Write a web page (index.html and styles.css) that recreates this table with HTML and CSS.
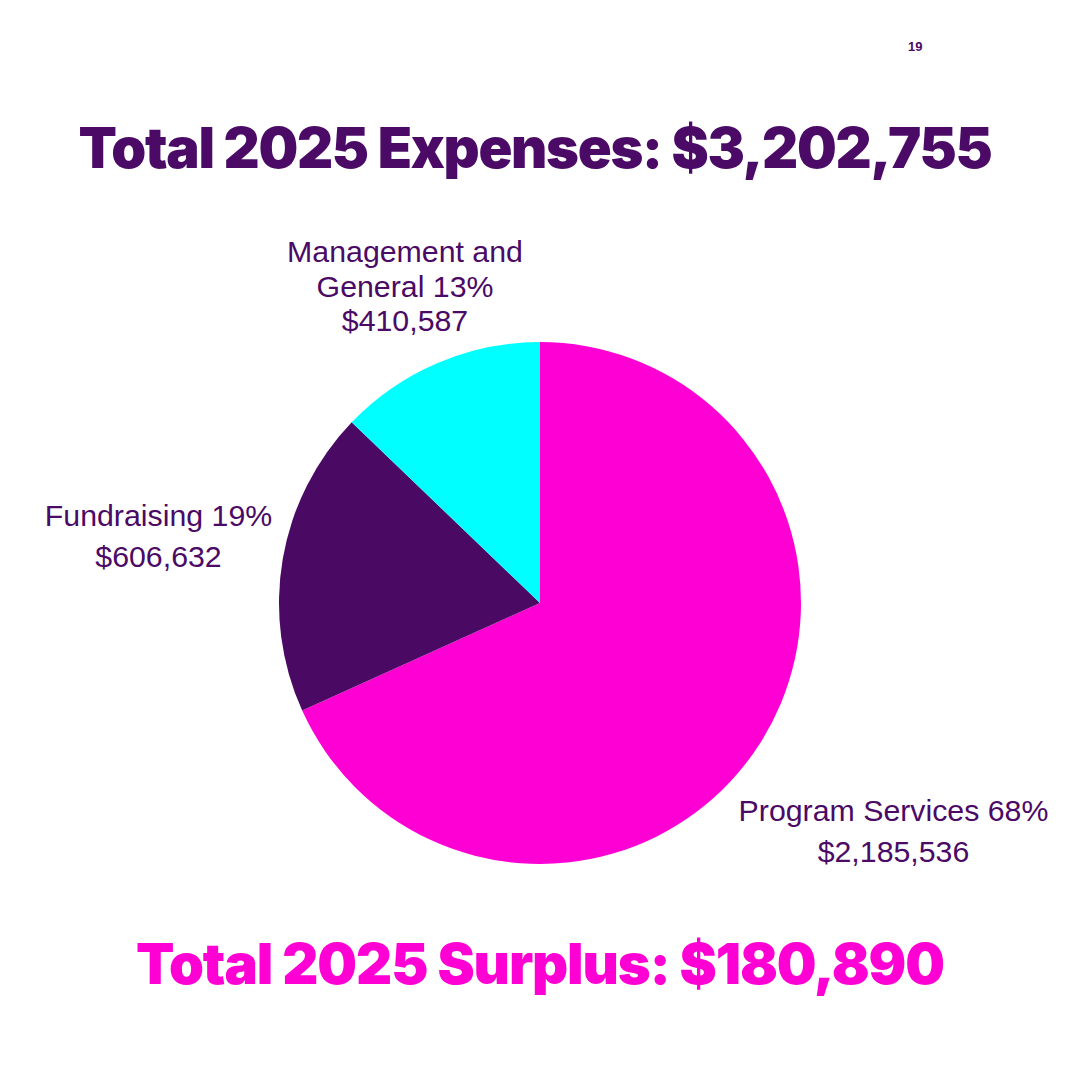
FILE: index.html
```html
<!DOCTYPE html>
<html lang="en">
<head>
<meta charset="utf-8">
<title>Total 2025 Expenses</title>
<link rel="stylesheet" href="styles.css">
</head>
<body>
<div class="page">
  <div class="page-num">19</div>
  <h1 class="title">Total 2025 Expenses: $3,202,755</h1>
  <div class="chart">
    <svg class="pie" width="1080" height="746" viewBox="0 0 1080 746">
      <path class="slice slice-program" d="M540 420 L540 159 A261 261 0 1 1 302.2 527.6 Z"/>
      <path class="slice slice-fund" d="M540 420 L302.2 527.6 A261 261 0 0 1 351.7 239.3 Z"/>
      <path class="slice slice-mgmt" d="M540 420 L351.7 239.3 A261 261 0 0 1 540 159 Z"/>
    </svg>
    <div class="label label-mgmt">Management and<br>General 13%<br>$410,587</div>
    <div class="label label-fund">Fundraising 19%<br>$606,632</div>
    <div class="label label-program">Program Services 68%<br>$2,185,536</div>
  </div>
  <h2 class="surplus">Total 2025 Surplus: $180,890</h2>
</div>
</body>
</html>
```
FILE: styles.css
```css
html, body {
  margin: 0;
  padding: 0;
  background: #ffffff;
}
.page {
  position: relative;
  width: 1080px;
  height: 1080px;
  overflow: hidden;
  font-family: "Liberation Sans", Arial, sans-serif;
  color: #4a0a66;
}
.page-num {
  position: absolute;
  left: 908px;
  top: 39px;
  font-size: 13px;
  font-weight: 700;
  color: #4a0a66;
}
.title {
  margin: 0;
  padding-top: 113px;
  padding-right: 10px;
  text-align: center;
  font-family: Inter, "DejaVu Sans", sans-serif;
  font-weight: 900;
  font-size: 56px;
  line-height: 70px;
  letter-spacing: -1.3px;
  color: #4a0a66;
}
.chart {
  position: relative;
  height: 746px;
}
.pie {
  display: block;
}
.slice-program { fill: #ff00d4; }
.slice-fund { fill: #4a0a63; }
.slice-mgmt { fill: #00ffff; }
.label {
  position: absolute;
  width: 360px;
  text-align: center;
  white-space: nowrap;
  font-size: 30.3px;
  color: #4a0a66;
}
.label-mgmt {
  left: 225px;
  top: 52px;
  line-height: 34.5px;
}
.label-fund {
  left: -21.5px;
  top: 311.6px;
  line-height: 41px;
}
.label-program {
  left: 713.5px;
  top: 606.6px;
  line-height: 41px;
}
.surplus {
  margin: 0;
  text-align: center;
  font-family: Inter, "DejaVu Sans", sans-serif;
  font-weight: 900;
  font-size: 56px;
  line-height: 70px;
  letter-spacing: -1.1px;
  color: #ff00d4;
}
```
